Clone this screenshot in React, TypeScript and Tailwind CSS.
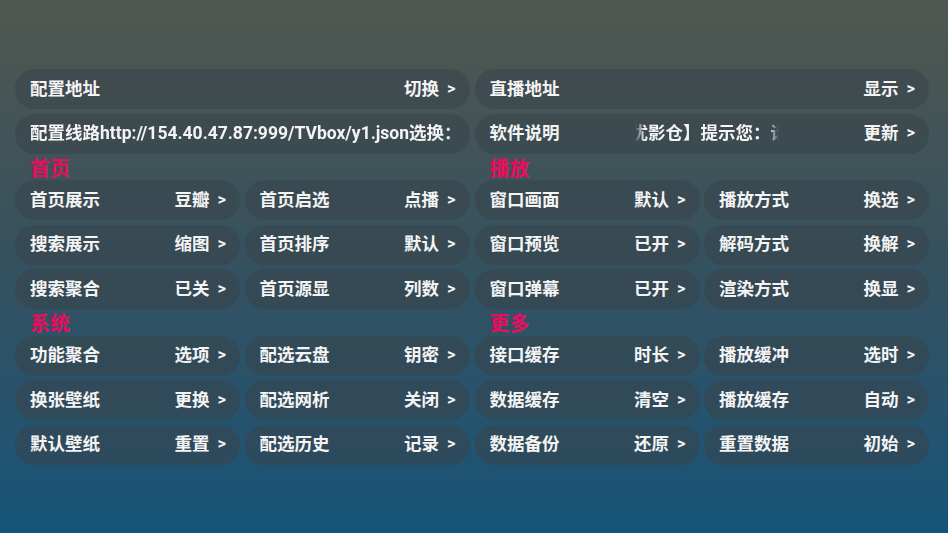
import React from "react";

type Item = { label: string; value: string };

const font = { fontFamily: 'Roboto, "Noto Sans CJK SC", "Noto Sans", sans-serif' };

const fadeBoth =
  "[mask-image:linear-gradient(to_right,transparent,black_10px,black_calc(100%-10px),transparent)] [-webkit-mask-image:linear-gradient(to_right,transparent,black_10px,black_calc(100%-10px),transparent)]";
const fadeRight =
  "[mask-image:linear-gradient(to_right,black_calc(100%-12px),transparent)] [-webkit-mask-image:linear-gradient(to_right,black_calc(100%-12px),transparent)]";

function Arrow() {
  return <span className="ml-[8px] text-[16.5px]">&gt;</span>;
}

function Pill({ label, value }: Item) {
  return (
    <div className="flex h-[40px] items-center justify-between rounded-full bg-[#39434a]/55 pl-[15px] pr-[14px]">
      <span>{label}</span>
      <span className="flex items-center">
        {value}
        <Arrow />
      </span>
    </div>
  );
}

function Section({ title, items }: { title: string; items: Item[] }) {
  return (
    <div className="flex flex-col">
      <div className="h-[26.5px] pl-[15px] pt-[5px] text-[20px] leading-[20px] text-[#ec0b5c]">{title}</div>
      <div className="grid grid-cols-2 gap-[4.5px]">
        {items.map((it) => (
          <Pill key={it.label} {...it} />
        ))}
      </div>
    </div>
  );
}

const home: Item[] = [
  { label: "首页展示", value: "豆瓣" },
  { label: "首页启选", value: "点播" },
  { label: "搜索展示", value: "缩图" },
  { label: "首页排序", value: "默认" },
  { label: "搜索聚合", value: "已关" },
  { label: "首页源显", value: "列数" },
];

const play: Item[] = [
  { label: "窗口画面", value: "默认" },
  { label: "播放方式", value: "换选" },
  { label: "窗口预览", value: "已开" },
  { label: "解码方式", value: "换解" },
  { label: "窗口弹幕", value: "已开" },
  { label: "渲染方式", value: "换显" },
];

const system: Item[] = [
  { label: "功能聚合", value: "选项" },
  { label: "配选云盘", value: "钥密" },
  { label: "换张壁纸", value: "更换" },
  { label: "配选网析", value: "关闭" },
  { label: "默认壁纸", value: "重置" },
  { label: "配选历史", value: "记录" },
];

const more: Item[] = [
  { label: "接口缓存", value: "时长" },
  { label: "播放缓冲", value: "选时" },
  { label: "数据缓存", value: "清空" },
  { label: "播放缓存", value: "自动" },
  { label: "数据备份", value: "还原" },
  { label: "重置数据", value: "初始" },
];

export default function App() {
  return (
    <div
      style={font}
      className="h-[533px] w-full overflow-hidden bg-gradient-to-b from-[#50574f] via-[#34515f] to-[#155479] font-bold text-[17.5px] text-[#f4f4f4]"
    >
      <div className="flex w-[929px] flex-col pl-[15px] pt-[69px]">
        <div className="grid grid-cols-2 gap-x-[5px] gap-y-[4.5px]">
          <Pill label="配置地址" value="切换" />
          <Pill label="直播地址" value="显示" />
          <div className="flex h-[40px] items-center rounded-full bg-[#39434a]/55 pl-[15px] pr-[11px]">
            <div className={`min-w-0 flex-1 overflow-hidden whitespace-nowrap ${fadeRight}`}>
              配置线路http://154.40.47.87:999/TVbox/y1.json选换：点击可以切换线路
            </div>
          </div>
          <div className="flex h-[40px] items-center rounded-full bg-[#39434a]/55 pl-[15px] pr-[14px]">
            <span>软件说明</span>
            <div className={`ml-[75px] w-[144px] overflow-hidden whitespace-nowrap ${fadeBoth}`}>
              <span className="ml-[-4px]">优影仓】提示您：请勿相信视频中的广告</span>
            </div>
            <span className="ml-auto flex items-center">
              更新
              <Arrow />
            </span>
          </div>
        </div>
        <div className="grid grid-cols-2 gap-x-[5px]">
          <Section title="首页" items={home} />
          <Section title="播放" items={play} />
        </div>
        <div className="grid grid-cols-2 gap-x-[5px]">
          <Section title="系统" items={system} />
          <Section title="更多" items={more} />
        </div>
      </div>
    </div>
  );
}
